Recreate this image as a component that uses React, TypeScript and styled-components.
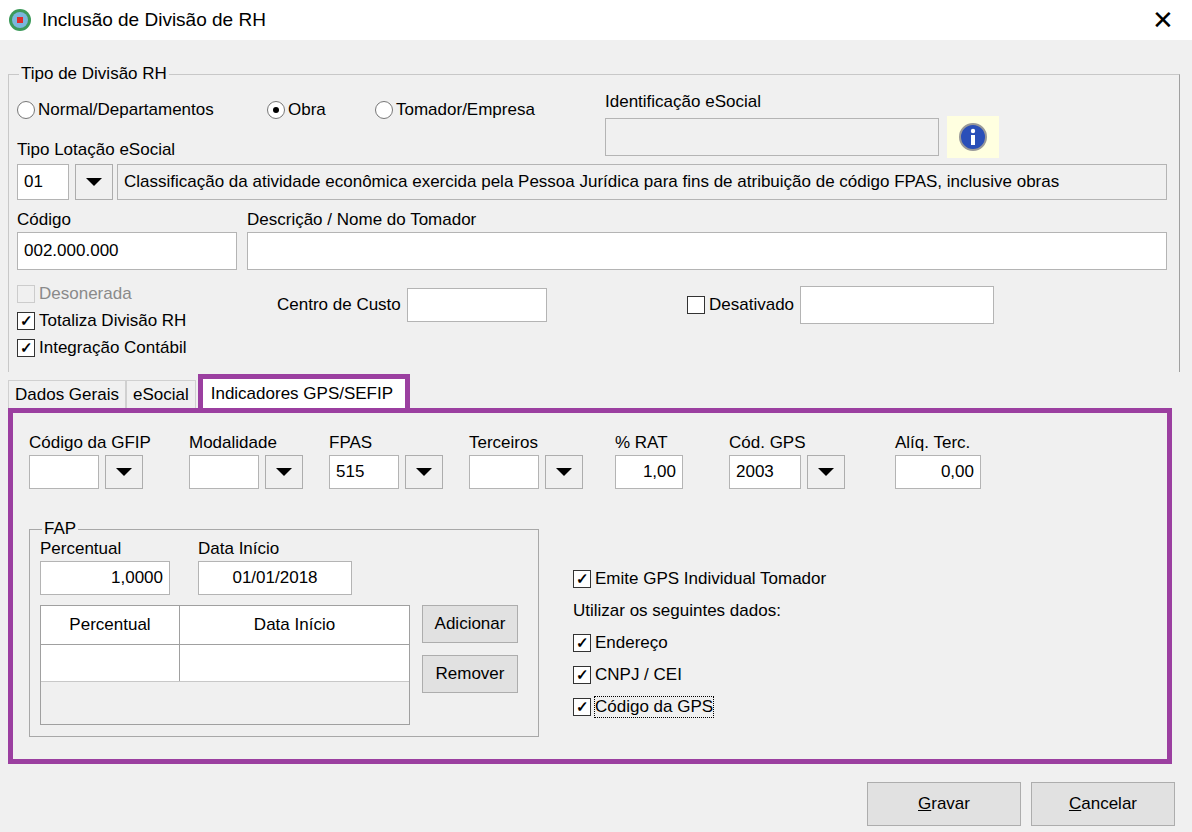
import React from 'react'
import styled, { createGlobalStyle } from 'styled-components'

const Global = createGlobalStyle`
  html, body { margin: 0; padding: 0; }
  body { font-family: "Liberation Sans", Arial, sans-serif; font-size: 17px; color: #000; background: #f0f0f0; }
`

const Window = styled.div`
  width: 1192px;
  height: 832px;
  background: #f0f0f0;
  display: flex;
  flex-direction: column;
  overflow: hidden;
`

const TitleBar = styled.div`
  height: 40px;
  background: #fff;
  display: flex;
  align-items: center;
  padding: 0 8px;
  gap: 10px;
  font-size: 19px;
`

const Close = styled.div`
  margin-left: auto;
  margin-right: 10px;
  font-size: 26px;
  font-weight: 300;
`

const Body = styled.div`
  flex: 1;
  padding: 24px 8px 0 8px;
  display: flex;
  flex-direction: column;
`

const Group = styled.fieldset`
  margin: 0;
  border: 1px solid #c8c8c8;
  border-bottom: none;
  border-right-color: #a0a0a0;
  padding: 0 10px 0 8px;
  height: 308px;
  box-sizing: border-box;
  display: flex;
  flex-direction: column;
  min-width: 0;
  margin-right: 4px;
`

const Legend = styled.legend`
  padding: 0 2px;
  margin-left: 2px;
`

const Row = styled.div<{ $gap?: number; $top?: number }>`
  display: flex;
  align-items: flex-end;
  gap: ${p => p.$gap ?? 0}px;
  margin-top: ${p => p.$top ?? 0}px;
`

const Col = styled.div<{ $gap?: number }>`
  display: flex;
  flex-direction: column;
  gap: ${p => p.$gap ?? 2}px;
`

const Radio = styled.span<{ $on?: boolean }>`
  width: 16px;
  height: 16px;
  border: 1px solid #777;
  border-radius: 50%;
  background: #fff;
  display: inline-flex;
  align-items: center;
  justify-content: center;
  margin-right: 3px;
  &::after {
    content: '';
    width: 6px;
    height: 6px;
    border-radius: 50%;
    background: ${p => (p.$on ? '#000' : 'transparent')};
  }
`

const Opt = styled.label<{ $w: number }>`
  display: flex;
  align-items: center;
  width: ${p => p.$w}px;
`

const Input = styled.div<{ $w: number; $h?: number; $align?: string; $bg?: string }>`
  width: ${p => p.$w}px;
  height: ${p => p.$h ?? 34}px;
  box-sizing: border-box;
  background: ${p => p.$bg ?? '#fff'};
  border: 1px solid #b4b4b4;
  display: flex;
  align-items: center;
  justify-content: ${p => p.$align ?? 'flex-start'};
  padding: 0 6px;
  white-space: nowrap;
  overflow: hidden;
`

const DropBtn = styled.div`
  width: 38px;
  height: 34px;
  box-sizing: border-box;
  border: 1px solid #adadad;
  background: #f0f0f0;
  display: flex;
  align-items: center;
  justify-content: center;
  margin-left: 6px;
  &::after {
    content: '';
    border-left: 8px solid transparent;
    border-right: 8px solid transparent;
    border-top: 8px solid #000;
  }
`

const Check = styled.span<{ $dis?: boolean }>`
  width: 18px;
  height: 18px;
  box-sizing: border-box;
  border: 1px solid ${p => (p.$dis ? '#ccc' : '#333')};
  background: ${p => (p.$dis ? '#f0f0f0' : '#fff')};
  display: inline-flex;
  align-items: center;
  justify-content: center;
  font-size: 15px;
  font-weight: bold;
  margin-right: 4px;
`

const CheckLabel = styled.label<{ $dis?: boolean; $h?: number }>`
  display: flex;
  align-items: center;
  color: ${p => (p.$dis ? '#8a8a8a' : '#000')};
  height: ${p => p.$h ?? 27}px;
`

const InfoBox = styled.div`
  width: 52px;
  height: 42px;
  background: #ffffe0;
  display: flex;
  align-items: center;
  justify-content: center;
  margin-left: 8px;
`

const Tabs = styled.div`
  display: flex;
  align-items: flex-end;
  height: 36px;
`

const Tab = styled.div<{ $active?: boolean }>`
  padding: 0 6px;
  height: ${p => (p.$active ? 34 : 28)}px;
  display: flex;
  align-items: center;
  border: 1px solid #d0d0d0;
  border-bottom: none;
  box-sizing: border-box;
  ${p => p.$active && 'border: 5px solid #9b3fa0; border-bottom: none; background: #fff; padding: 0 12px 0 8px; margin-left: 2px;'}
`

const Panel = styled.div`
  width: 1164px;
  height: 356px;
  box-sizing: border-box;
  border: 5px solid #9b3fa0;
  padding: 20px 16px;
  display: flex;
  flex-direction: column;
`

const FapGroup = styled.fieldset`
  margin: 0;
  width: 510px;
  height: 218px;
  box-sizing: border-box;
  border: 1px solid #a8a8a8;
  padding: 0 10px;
`

const Grid = styled.div`
  width: 370px;
  height: 120px;
  border: 1px solid #a0a0a0;
  background: #f0f0f0;
  box-sizing: border-box;
`

const GridHead = styled.div`
  display: grid;
  grid-template-columns: 138px 1fr;
  height: 38px;
  background: #fff;
  border-bottom: 1px solid #a0a0a0;
  & > div { display: flex; align-items: center; justify-content: center; }
  & > div + div { border-left: 1px solid #a0a0a0; }
`

const GridRow = styled.div`
  display: grid;
  grid-template-columns: 138px 1fr;
  height: 36px;
  background: #fff;
  border-bottom: 1px solid #c8c8c8;
  & > div + div { border-left: 1px solid #a0a0a0; }
`

const Btn = styled.div<{ $w: number; $h?: number }>`
  width: ${p => p.$w}px;
  height: ${p => p.$h ?? 38}px;
  box-sizing: border-box;
  border: 1px solid #adadad;
  background: #e1e1e1;
  display: flex;
  align-items: center;
  justify-content: center;
`

const Footer = styled.div`
  display: flex;
  justify-content: flex-end;
  gap: 10px;
  margin-top: 18px;
  padding-right: 9px;
`

const PlainLine = styled.div`
  height: 32px;
  display: flex;
  align-items: center;
`

const Focus = styled.span`
  outline: 1px dotted #000;
`

const Combo = ({ w, v }: { w: number; v?: string }) => (
  <Row>
    <Input $w={w}>{v}</Input>
    <DropBtn />
  </Row>
)

export default function App() {
  return (
    <Window>
      <Global />
      <TitleBar>
        <svg width="24" height="24" viewBox="0 0 24 24">
          <circle cx="12" cy="12" r="11" fill="#3c9a5a" />
          <circle cx="12" cy="12" r="8" fill="#7bb6dd" />
          <rect x="9" y="9" width="6" height="6" fill="#e02a2a" />
        </svg>
        Inclusão de Divisão de RH
        <Close>✕</Close>
      </TitleBar>
      <Body>
        <Group>
          <Legend>Tipo de Divisão RH</Legend>
          <Row style={{ alignItems: 'flex-start' }}>
            <Col $gap={20}>
              <Row $top={16}>
                <Opt $w={250}><Radio />Normal/Departamentos</Opt>
                <Opt $w={108}><Radio $on />Obra</Opt>
                <Opt $w={230}><Radio />Tomador/Empresa</Opt>
              </Row>
              <div>Tipo Lotação eSocial</div>
            </Col>
            <Col $gap={4} style={{ marginTop: 8 }}>
              <div>Identificação eSocial</div>
              <Row style={{ alignItems: 'center' }}>
                <Input $w={334} $h={38} $bg="#f0f0f0" />
                <InfoBox>
                  <svg width="30" height="30" viewBox="0 0 30 30">
                    <circle cx="15" cy="15" r="13" fill="#2a4fb8" stroke="#999" strokeWidth="2" />
                    <circle cx="15" cy="9" r="2.2" fill="#fff" />
                    <rect x="13" y="13" width="4" height="10" fill="#fff" />
                  </svg>
                </InfoBox>
              </Row>
            </Col>
          </Row>
          <Row $top={4}>
            <Input $w={52} $h={36}>01</Input>
            <DropBtn style={{ height: 36 }} />
            <Input $w={1050} $h={36} $bg="#f0f0f0" style={{ marginLeft: 4 }}>
              Classificação da atividade econômica exercida pela Pessoa Jurídica para fins de atribuição de código FPAS, inclusive obras
            </Input>
          </Row>
          <Row $top={10} $gap={10}>
            <Col>
              <div>Código</div>
              <Input $w={220} $h={38}>002.000.000</Input>
            </Col>
            <Col>
              <div>Descrição / Nome do Tomador</div>
              <Input $w={920} $h={38} />
            </Col>
          </Row>
          <Row $top={10} style={{ alignItems: 'flex-start' }}>
            <Col $gap={0} style={{ width: 260 }}>
              <CheckLabel $dis><Check $dis />Desonerada</CheckLabel>
              <CheckLabel><Check>✓</Check>Totaliza Divisão RH</CheckLabel>
              <CheckLabel><Check>✓</Check>Integração Contábil</CheckLabel>
            </Col>
            <Row style={{ alignItems: 'center', marginTop: 8, width: 410 }} $gap={6}>
              Centro de Custo <Input $w={140} $h={34} />
            </Row>
            <Row style={{ alignItems: 'center', marginTop: 6 }} $gap={6}>
              <CheckLabel><Check />Desativado</CheckLabel>
              <Input $w={194} $h={38} />
            </Row>
          </Row>
        </Group>
        <Tabs>
          <Tab>Dados Gerais</Tab>
          <Tab>eSocial</Tab>
          <Tab $active>Indicadores GPS/SEFIP</Tab>
        </Tabs>
        <Panel>
          <Row style={{ alignItems: 'flex-start' }}>
            <Col style={{ width: 160 }}><div>Código da GFIP</div><Combo w={70} /></Col>
            <Col style={{ width: 140 }}><div>Modalidade</div><Combo w={70} /></Col>
            <Col style={{ width: 140 }}><div>FPAS</div><Combo w={70} v="515" /></Col>
            <Col style={{ width: 146 }}><div>Terceiros</div><Combo w={70} /></Col>
            <Col style={{ width: 114 }}><div>% RAT</div><Input $w={68} $align="flex-end">1,00</Input></Col>
            <Col style={{ width: 166 }}><div>Cód. GPS</div><Combo w={72} v="2003" /></Col>
            <Col><div>Alíq. Terc.</div><Input $w={86} $align="flex-end">0,00</Input></Col>
          </Row>
          <Row $top={30} style={{ alignItems: 'flex-start' }}>
            <FapGroup>
              <Legend>FAP</Legend>
              <Row $gap={28}>
                <Col><div>Percentual</div><Input $w={130} $align="flex-end">1,0000</Input></Col>
                <Col><div>Data Início</div><Input $w={154} $align="center">01/01/2018</Input></Col>
              </Row>
              <Row $top={10} $gap={12} style={{ alignItems: 'flex-start' }}>
                <Grid>
                  <GridHead><div>Percentual</div><div>Data Início</div></GridHead>
                  <GridRow><div /><div /></GridRow>
                </Grid>
                <Col $gap={12}>
                  <Btn $w={96}>Adicionar</Btn>
                  <Btn $w={96}>Remover</Btn>
                </Col>
              </Row>
            </FapGroup>
            <Col $gap={0} style={{ marginLeft: 34, marginTop: 44 }}>
              <CheckLabel $h={32}><Check>✓</Check>Emite GPS Individual Tomador</CheckLabel>
              <PlainLine>Utilizar os seguintes dados:</PlainLine>
              <CheckLabel $h={32}><Check>✓</Check>Endereço</CheckLabel>
              <CheckLabel $h={32}><Check>✓</Check>CNPJ / CEI</CheckLabel>
              <CheckLabel $h={32}><Check>✓</Check><Focus>Código da GPS</Focus></CheckLabel>
            </Col>
          </Row>
        </Panel>
        <Footer>
          <Btn $w={154} $h={44}><u>G</u>ravar</Btn>
          <Btn $w={144} $h={44}><u>C</u>ancelar</Btn>
        </Footer>
      </Body>
    </Window>
  )
}
